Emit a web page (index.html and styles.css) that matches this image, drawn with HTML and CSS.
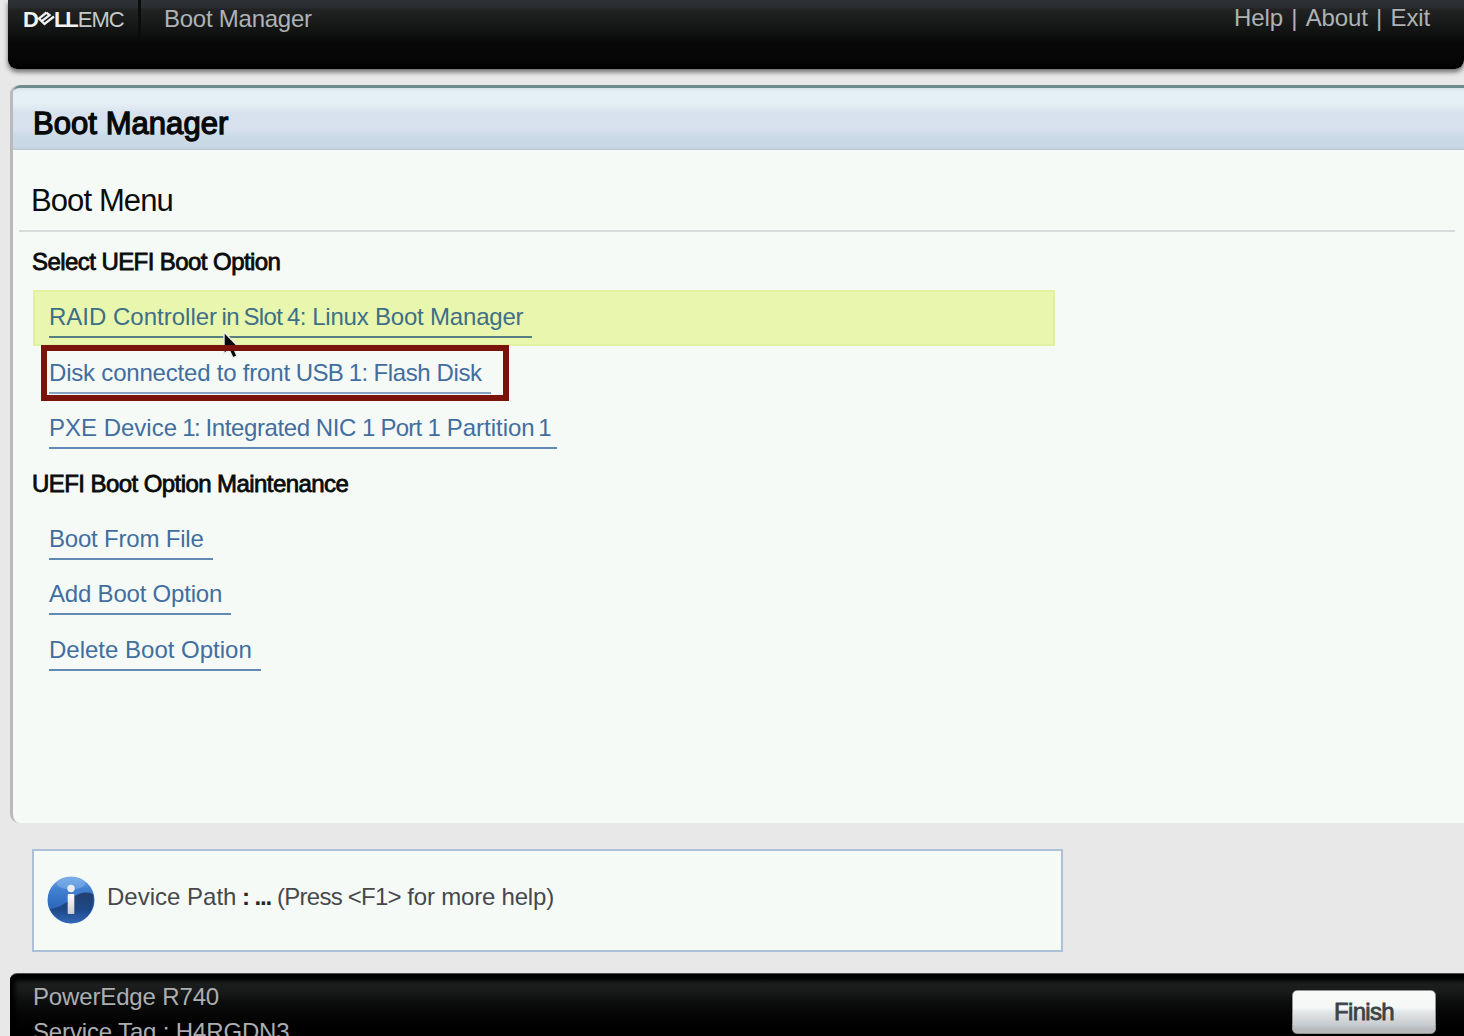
FILE: index.html
```html
<!DOCTYPE html>
<html lang="en">
<head>
<meta charset="utf-8">
<title>Boot Manager</title>
<link rel="stylesheet" href="styles.css">
</head>
<body>
<div class="screen">
  <header class="topbar">
    <div class="brand">
      <span class="dell">D</span>
      <svg class="dell-e" viewBox="0 0 19 17" width="19" height="17"><path d="M9.500 2.500 2 8.500 7.500 14 17 6.500M4.800 11.200 13.500 4.300M9.500 2.500 12.500 5.300" fill="none" stroke="#eef1f1" stroke-width="2.300"/></svg>
      <span class="dell ll">LL</span><span class="emc">EMC</span>
    </div>
    <div class="app-name">Boot Manager</div>
    <nav class="top-links"><a>Help</a><span>|</span><a>About</a><span>|</span><a>Exit</a></nav>
  </header>

  <main class="panel">
    <h1 class="panel-title">Boot Manager</h1>
    <section class="panel-body">
      <h2 class="page-title">Boot Menu</h2>
      <h3 class="group">Select UEFI Boot Option</h3>
      <ul class="options">
        <li class="option selected"><a class="link">RAID Controller<span class="slot"> in Slot 4:</span><span class="snug"> Linux Boot Manager</span></a>
          <svg class="cursor" viewBox="0 0 20 30" width="20" height="30"><path d="M3 2V24L8 19.500 12 28 16 26 12.500 18H18.500Z" fill="#0a0a0c" stroke="#e8ebe6" stroke-width="1.400"/></svg>
        </li>
        <li class="option boxed"><a class="link"><span class="snug">Disk connected to front</span><span class="tighter"> USB 1:</span><span class="tight"> Flash Disk</span></a><span class="callout"></span></li>
        <li class="option"><a class="link">PXE Device<span class="digit"> 1:</span><span class="tight"> Integrated NIC</span><span class="tighter"> 1 Port 1</span> Partition<span class="last-digit"> 1</span></a></li>
      </ul>
      <h3 class="group maintenance">UEFI Boot Option Maintenance</h3>
      <ul class="options">
        <li class="option"><a class="link snug">Boot From File</a></li>
        <li class="option"><a class="link snug">Add Boot Option</a></li>
        <li class="option"><a class="link">Delete Boot Option</a></li>
      </ul>
    </section>
  </main>

  <aside class="info">
    <svg class="info-icon" viewBox="0 0 48 48" width="48" height="48">
      <defs>
        <linearGradient id="ball" x1="0" y1="0" x2="0" y2="1"><stop offset="0" stop-color="#74ace8"/><stop offset=".25" stop-color="#4382d2"/><stop offset=".65" stop-color="#2f68bd"/><stop offset="1" stop-color="#3570c0"/></linearGradient>
        <linearGradient id="shade" x1="0" y1="0" x2="0" y2="1"><stop offset="0" stop-color="#21416f"/><stop offset=".55" stop-color="#1d4787"/><stop offset="1" stop-color="#3268b7"/></linearGradient>
        <linearGradient id="stem" x1="0" y1="0" x2="0" y2="1"><stop offset="0" stop-color="#ffffff"/><stop offset="1" stop-color="#cdcdd2"/></linearGradient>
      </defs>
      <circle cx="24" cy="24" r="23.500" fill="url(#ball)"/>
      <path d="M3 33C12 32 19 27 25 22C31 17 39 15 46 18C49 30 42 42 33 45.500C22 50 8 45 3 33Z" fill="url(#shade)"/>
      <ellipse cx="24" cy="7.500" rx="14" ry="6" fill="#83b5ea" opacity=".55"/>
      <circle cx="24" cy="12.500" r="3.700" fill="#e9edf5"/>
      <rect x="20.700" y="18" width="6.600" height="20" rx="1" fill="url(#stem)"/>
    </svg>
    <p class="info-text">Device Path<b> : ...</b><span class="tighter"> (Press &lt;F1&gt;</span><span class="snug"> for more help)</span></p>
  </aside>

  <footer class="bottombar">
    <div class="system"><p>PowerEdge R740</p><p>Service Tag : H4RGDN3</p></div>
    <button class="finish">Finish</button>
  </footer>
</div>
</body>
</html>
```
FILE: styles.css
```css
* { box-sizing: border-box; }
body { margin: 0; background: #e8e8e8; font-family: "Liberation Sans", Arial, sans-serif; font-size: 24px; overflow: hidden; }
h1, h2, h3, p, ul { margin: 0; padding: 0; font-weight: normal; }
ul { list-style: none; }
.screen { width: 1464px; height: 1036px; overflow: hidden; padding-left: 8px; display: flex; flex-direction: column; }

.topbar { flex: none; height: 69px; display: flex; align-items: flex-start; border-radius: 0 0 9px 9px; color: #aeb2b5; background: linear-gradient(#2d3035 0, #2b2f34 7px, #222424 9px, #1a1c1c 20px, #111212 32px, #080808 43px, #060606 60px, #010101 68px); box-shadow: 0 3px 5px rgba(0, 0, 0, .55); }
.brand { width: 133px; height: 39px; padding-left: 15px; display: flex; align-items: center; border-right: 3px solid #0b0c0c; line-height: 37px; }
.dell { color: #f1f3f3; font-size: 22px; line-height: 37px; font-weight: bold; }
.dell-e { flex: none; margin: 0 -2px 2px -2px; }
.ll { letter-spacing: -2px; }
.emc { margin-left: 1px; color: #c5c9ca; font-size: 22px; letter-spacing: -1px; }
.app-name { padding-left: 23px; line-height: 38px; letter-spacing: -.25px; }
.top-links { margin-left: auto; padding-right: 34px; line-height: 36px; letter-spacing: -.15px; display: flex; gap: 8.4px; }

.panel { flex: none; margin: 16px 0 0 2px; height: 738px; border-left: 3px solid #b9babd; border-radius: 9px 0 0 9px; background: #f6faf7; overflow: hidden; }
.panel-title { height: 65px; padding-left: 20px; border-top: 3px solid #6e8b90; border-bottom: 1px solid #bec8d0; border-radius: 7px 0 0; background: linear-gradient(#d6e3e8 0, #e5f0f6 4px, #e5f0f6 15px, #dee9f2 20px, #d7e2ee 25px, #d7e2ee 40px, #cbdae7 48px, #c9d8e5 58px, #c2d0db 61px); line-height: 71px; font-size: 31px; letter-spacing: .05px; color: #060909; -webkit-text-stroke: 1.3px #060909; }
.panel-body { padding-left: 6px; }
.page-title { height: 82px; width: 1436px; padding-left: 12px; border-bottom: 2px solid #d8dadb; line-height: 101px; font-size: 31px; letter-spacing: -.9px; color: #0a0d0d; }
.group { height: 58px; padding-left: 13px; line-height: 59px; font-size: 24px; letter-spacing: -.57px; color: #080b0b; -webkit-text-stroke: .8px #080b0b; }
.maintenance { height: 55px; line-height: 54px; }
.options { padding-left: 14px; }
.option { position: relative; width: 1022px; height: 55.5px; padding-left: 16px; display: flex; align-items: flex-start; }
.selected { background: #e9f6ad; box-shadow: inset 0 0 0 2px #e2f0a2; }
.link { height: 48px; flex: none; padding-right: 9px; line-height: 53px; white-space: nowrap; border-bottom: 2px solid #6288b4; color: #426e9f; }
.selected .link { border-color: #568080; color: #3d6f88; }
.boxed .link { border-color: #86a2c4; }
.snug { letter-spacing: -.2px; }
.tight { letter-spacing: -.4px; }
.tighter { letter-spacing: -.75px; }
.slot { letter-spacing: -.6px; word-spacing: -1.6px; }
.digit { letter-spacing: -1.5px; }
.last-digit { letter-spacing: -3.2px; }
.cursor { position: absolute; left: 188px; top: 40px; z-index: 1; }
.callout { position: absolute; left: 8px; top: -1px; width: 468px; height: 56px; border: 6px solid #7a140b; z-index: 2; }

.info { flex: none; margin: 26px 0 0 24px; width: 1031px; height: 103px; padding-left: 13px; border: 2px solid #acc0d7; background: #f6faf7; display: flex; align-items: center; }
.info-icon { margin-top: -2px; }
.info-text { padding-left: 12px; margin-top: -8px; color: #45484c; white-space: nowrap; }
.info-text b { color: #25282a; letter-spacing: -1.1px; }

.bottombar { flex: none; margin: 21px 0 0 2px; height: 63px; padding: 9px 28px 0 23px; display: flex; justify-content: space-between; border-radius: 7px 0 0; border-top: 1px solid #4a504d; color: #acaeb2; background: linear-gradient(#000 0, #020303 4px, #1c1e1e 10px, #191b1b 17px, #0c0d0d 28px, #070707 38px, #000 56px); box-shadow: inset 5px 0 5px #000; }
.system p { height: 35px; line-height: 28px; letter-spacing: -.15px; white-space: nowrap; }
.finish { margin-top: 7px; width: 144px; height: 44px; padding: 0; border: 1px solid #8e9496; border-radius: 5px; background: linear-gradient(#f7faf7 0, #f5f8f6 17px, #e6eaeb 20px, #d5d7d8 28px, #c5ccd1 34px, #b9b9bc 38px, #b9b9bc); font: 24px/40px "Liberation Sans", Arial, sans-serif; letter-spacing: -.7px; color: #3b4346; -webkit-text-stroke: .8px #3b4346; }
```
